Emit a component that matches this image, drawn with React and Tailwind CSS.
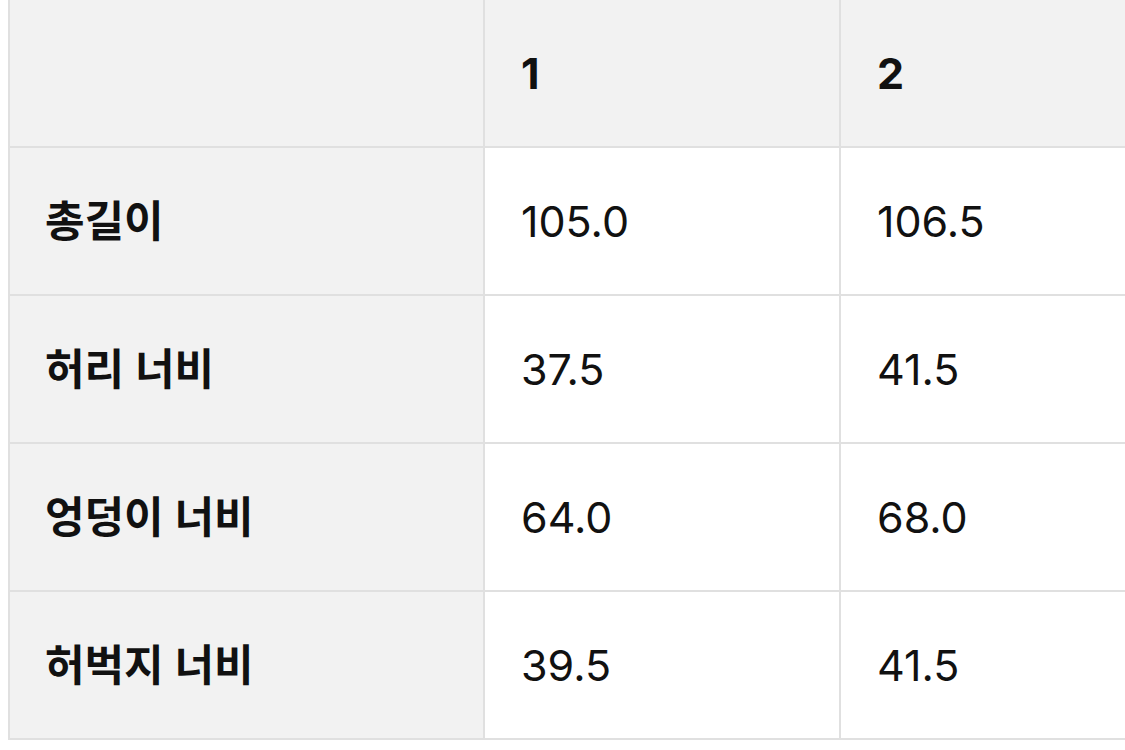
const rows = [
  { label: '총길이', a: '105.0', b: '106.5' },
  { label: '허리 너비', a: '37.5', b: '41.5' },
  { label: '엉덩이 너비', a: '64.0', b: '68.0' },
  { label: '허벅지 너비', a: '39.5', b: '41.5' },
]

const font = { fontFamily: 'Inter, "Noto Sans CJK KR", sans-serif' }

function Cell({ children, head, first, className = '' }) {
  return (
    <div
      className={`flex h-[148px] items-center border-b-2 border-[#e0e0e0] text-[#111] ${
        first ? 'pl-[35px] text-[43px]' : 'border-l-2 pl-[36px] text-[43px]'
      } ${head ? 'bg-[#f2f2f2]' : 'bg-white'} ${className}`}
    >
      {children}
    </div>
  )
}

export default function App() {
  return (
    <div className="h-[750px] w-[1125px] overflow-hidden bg-white" style={font}>
      <div className="ml-2 grid w-[1190px] grid-cols-[473px_356px_356px] border-l-2 border-[#e0e0e0]">
        <Cell head first />
        <Cell head className="font-bold">1</Cell>
        <Cell head className="font-bold">2</Cell>
        {rows.map((r) => (
          <div key={r.label} className="contents">
            <Cell head first className="font-semibold">{r.label}</Cell>
            <Cell>{r.a}</Cell>
            <Cell>{r.b}</Cell>
          </div>
        ))}
      </div>
    </div>
  )
}
